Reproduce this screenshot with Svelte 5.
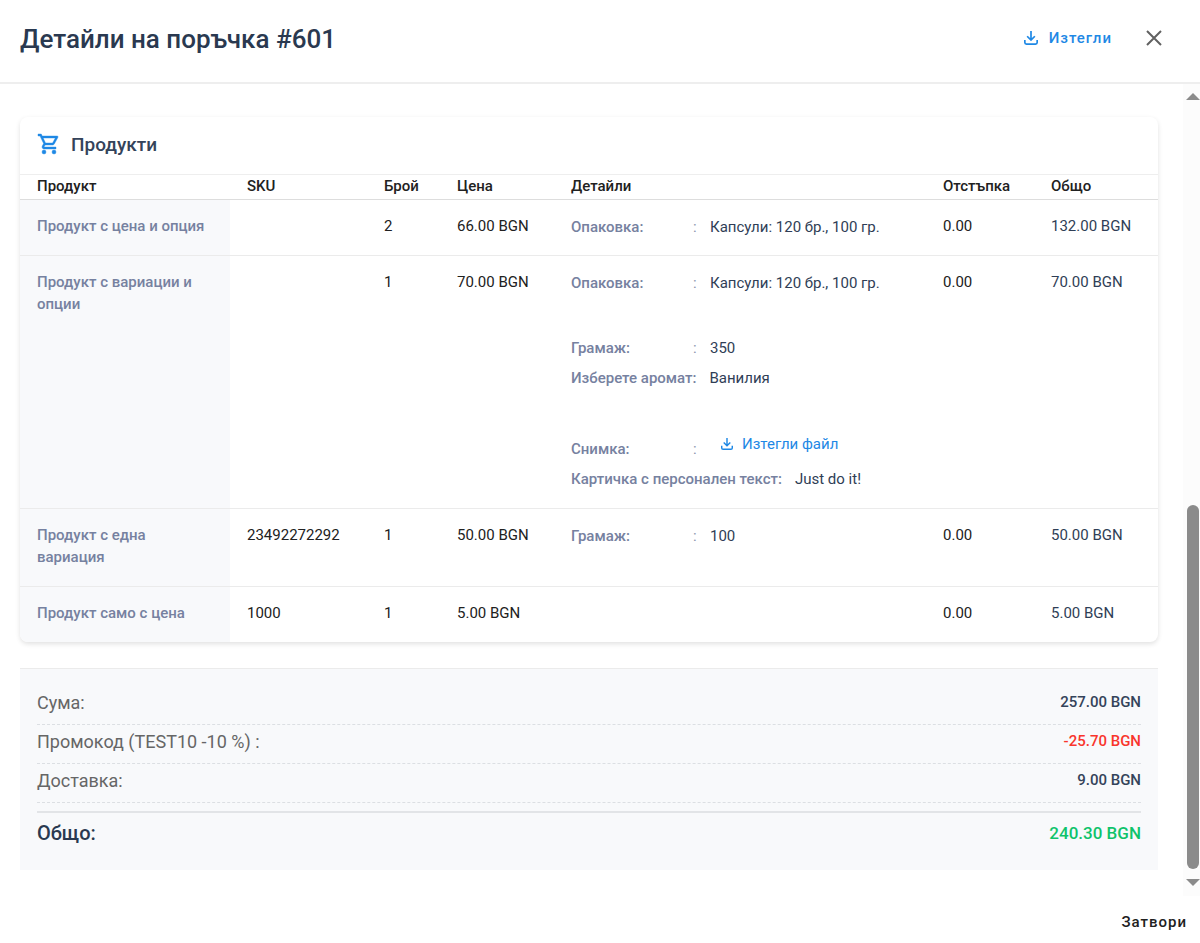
<script lang="ts">
	type Detail = { label: string; value: string; colon?: boolean; file?: boolean };
	type Product = {
		name: string;
		sku: string;
		count: number;
		price: string;
		details: Detail[][];
		discount: string;
		total: string;
	};

	const columns = [
		{ key: 'name', title: 'Продукт' },
		{ key: 'sku', title: 'SKU' },
		{ key: 'count', title: 'Брой' },
		{ key: 'price', title: 'Цена' },
		{ key: 'details', title: 'Детайли' },
		{ key: 'discount', title: 'Отстъпка' },
		{ key: 'total', title: 'Общо' }
	];

	const pack: Detail = { label: 'Опаковка:', value: 'Капсули: 120 бр., 100 гр.', colon: true };

	const products: Product[] = [
		{
			name: 'Продукт с цена и опция',
			sku: '',
			count: 2,
			price: '66.00 BGN',
			details: [[pack]],
			discount: '0.00',
			total: '132.00 BGN'
		},
		{
			name: 'Продукт с вариации и опции',
			sku: '',
			count: 1,
			price: '70.00 BGN',
			details: [
				[pack],
				[
					{ label: 'Грамаж:', value: '350', colon: true },
					{ label: 'Изберете аромат:', value: 'Ванилия' }
				],
				[
					{ label: 'Снимка:', value: 'Изтегли файл', colon: true, file: true },
					{ label: 'Картичка с персонален текст:', value: 'Just do it!' }
				]
			],
			discount: '0.00',
			total: '70.00 BGN'
		},
		{
			name: 'Продукт с една вариация',
			sku: '23492272292',
			count: 1,
			price: '50.00 BGN',
			details: [[{ label: 'Грамаж:', value: '100', colon: true }]],
			discount: '0.00',
			total: '50.00 BGN'
		},
		{
			name: 'Продукт само с цена',
			sku: '1000',
			count: 1,
			price: '5.00 BGN',
			details: [],
			discount: '0.00',
			total: '5.00 BGN'
		}
	];

	const summary = [
		{ label: 'Сума:', value: '257.00 BGN' },
		{ label: 'Промокод (TEST10 -10 %) :', value: '-25.70 BGN', negative: true },
		{ label: 'Доставка:', value: '9.00 BGN' }
	];
</script>

{#snippet downloadIcon(size: number)}
	<svg width={size} height={size} viewBox="0 0 20 20" fill="none" aria-hidden="true">
		<path
			d="M10 0v13M4.500 7.500L10 13l5.500-5.500M1.200 13v3.500a2.300 2.300 0 0 0 2.300 2.300h13a2.300 2.300 0 0 0 2.300-2.300V13"
			stroke="currentColor"
			stroke-width="2.400"
		/>
	</svg>
{/snippet}

<div class="dialog">
	<header class="dialog-header">
		<h1>Детайли на поръчка #601</h1>
		<div class="actions">
			<button class="download" type="button">
				{@render downloadIcon(14)}
				Изтегли
			</button>
			<button class="close" type="button" aria-label="Затвори прозореца">
				<svg width="16" height="16" viewBox="0 0 16 16" aria-hidden="true">
					<path d="M1 1l14 14M15 1L1 15" stroke="currentColor" stroke-width="2" fill="none" />
				</svg>
			</button>
		</div>
	</header>

	<div class="dialog-body">
		<main>
			<section class="card">
				<h2>
					<svg width="24" height="24" viewBox="0 0 24 24" fill="currentColor" aria-hidden="true">
						<path
							d="M15.550 13c.75 0 1.410-.41 1.750-1.030l3.580-6.490A1 1 0 0 0 20.010 4H5.210l-.94-2H1v2h2l3.600 7.590-1.350 2.440C4.520 15.370 5.480 17 7 17h12v-2H7l1.100-2h7.450zM6.160 6h12.150l-2.760 5H8.530L6.160 6zM7 18a2 2 0 1 0 0 4 2 2 0 0 0 0-4zm10 0a2 2 0 1 0 0 4 2 2 0 0 0 0-4z"
							stroke="currentColor"
							stroke-width="0.400"
						/>
					</svg>
					Продукти
				</h2>
				<table>
					<colgroup>
						{#each columns as column}
							<col class={column.key} />
						{/each}
					</colgroup>
					<thead>
						<tr>
							{#each columns as column}
								<th scope="col">{column.title}</th>
							{/each}
						</tr>
					</thead>
					<tbody>
						{#each products as product}
							<tr>
								<th scope="row">{product.name}</th>
								<td>{product.sku}</td>
								<td>{product.count}</td>
								<td>{product.price}</td>
								<td>
									{#each product.details as group}
										<div class="group">
											{#each group as detail}
												<div class="detail" class:with-file={detail.file}>
													<span class="label" class:fixed={detail.colon}>{detail.label}</span>
													{#if detail.colon}
														<span class="colon">:</span>
													{/if}
													{#if detail.file}
														<a class="file" href="#file">
															{@render downloadIcon(12)}
															{detail.value}
														</a>
													{:else}
														<span class="value">{detail.value}</span>
													{/if}
												</div>
											{/each}
										</div>
									{/each}
								</td>
								<td>{product.discount}</td>
								<td class="total">{product.total}</td>
							</tr>
						{/each}
					</tbody>
				</table>
			</section>

			<section class="summary">
				{#each summary as row}
					<div class="summary-row">
						<span>{row.label}</span>
						<strong class:negative={row.negative}>{row.value}</strong>
					</div>
				{/each}
				<div class="grand-total">
					<span>Общо:</span>
					<strong>240.30 BGN</strong>
				</div>
			</section>
		</main>

		<div class="scrollbar" aria-hidden="true">
			<span class="arrow up"></span>
			<div class="track"><div class="thumb"></div></div>
			<span class="arrow down"></span>
		</div>
	</div>

	<footer>
		<button type="button">Затвори</button>
	</footer>
</div>

<style>
	:global(body) {
		margin: 0;
		background: #fff;
	}

	.dialog {
		display: flex;
		flex-direction: column;
		min-height: 100vh;
		font-family: Roboto, 'Liberation Sans', sans-serif;
		font-size: 15px;
		color: #212121;
	}

	button {
		padding: 0;
		border: 0;
		background: none;
		color: inherit;
		font: inherit;
		font-weight: 500;
		letter-spacing: 1px;
		cursor: pointer;
	}

	svg {
		display: block;
		flex: none;
	}

	.dialog-header {
		display: flex;
		align-items: center;
		justify-content: space-between;
		box-sizing: border-box;
		height: 84px;
		padding: 0 38px 4px 20px;
		border-bottom: 2px solid #eee;
	}

	h1 {
		margin: 0;
		font-size: 26px;
		line-height: 32px;
		font-weight: 500;
		color: #2a3950;
	}

	.actions {
		display: flex;
		align-items: center;
		gap: 34px;
		padding-bottom: 2px;
	}

	.download {
		display: flex;
		align-items: center;
		gap: 11px;
		color: #1e88e5;
	}

	.close {
		color: #616161;
	}

	.dialog-body {
		display: flex;
		flex: 1;
	}

	main {
		flex: 1;
		min-width: 0;
		padding: 33px 25px 0 20px;
	}

	.card {
		overflow: hidden;
		border-radius: 8px;
		box-shadow: 0 2px 5px rgba(0, 0, 0, 0.12);
	}

	h2 {
		display: flex;
		align-items: center;
		gap: 10px;
		height: 54px;
		margin: 0;
		padding: 0 17px 3px;
		border-bottom: 1px solid #eee;
		font-size: 19px;
		font-weight: 500;
		color: #34435a;
	}

	h2 svg {
		color: #1e88e5;
	}

	table {
		width: 100%;
		table-layout: fixed;
		border-collapse: separate;
		border-spacing: 0;
	}

	.name {
		width: 210px;
	}

	.sku {
		width: 137px;
	}

	.count {
		width: 73px;
	}

	.price {
		width: 114px;
	}

	.discount {
		width: 108px;
	}

	.total {
		width: 124px;
	}

	th,
	td {
		box-sizing: border-box;
		padding: 15px 17px 16px;
		border-bottom: 1px solid #ebebeb;
		line-height: 22px;
		font-weight: 400;
		text-align: left;
		vertical-align: top;
	}

	thead th {
		padding: 0 17px 2px;
		border-color: #ddd;
		font-weight: 500;
	}

	tbody th {
		padding-bottom: 18px;
		background: #f8f9fb;
		font-weight: 500;
		color: #7681a0;
	}

	tbody tr:last-child > * {
		border-bottom: 0;
	}

	td.total {
		color: #2f3e56;
	}

	.group + .group {
		padding: 41px 0 1px;
	}

	.detail {
		display: flex;
		align-items: flex-end;
		line-height: 24px;
		white-space: nowrap;
	}

	.detail + .detail {
		margin-top: 6px;
	}

	.label {
		margin-right: 13px;
		font-weight: 500;
		color: #7681a0;
	}

	.label.fixed {
		width: 122px;
		margin-right: 0;
	}

	.colon {
		width: 17px;
		color: #8a94ae;
	}

	.value {
		color: #2f3e56;
	}

	.with-file {
		height: 29px;
	}

	.file {
		display: flex;
		align-items: center;
		align-self: flex-start;
		gap: 9px;
		margin-left: 11px;
		color: #1e88e5;
		text-decoration: none;
	}

	.summary {
		margin-top: 26px;
		padding: 17px 17px 19px;
		border-top: 1px solid #ebebeb;
		background: #f8f9fb;
	}

	.summary-row {
		display: flex;
		justify-content: space-between;
		padding-bottom: 4px;
		border-bottom: 1px dashed #dcdfe3;
		line-height: 34px;
		font-size: 18px;
		color: #666;
	}

	.summary-row strong {
		font-size: 15px;
		line-height: 32px;
		font-weight: 500;
		color: #34435a;
	}

	.summary-row .negative {
		color: #f9352c;
	}

	.grand-total {
		display: flex;
		align-items: center;
		justify-content: space-between;
		height: 36px;
		margin-top: 8px;
		padding-top: 2px;
		border-top: 2px solid #e2e4e7;
		font-size: 20px;
		font-weight: 500;
		line-height: 36px;
		color: #2a3950;
	}

	.grand-total strong {
		font-size: 17px;
		font-weight: 500;
		color: #0fc36b;
	}

	.scrollbar {
		display: flex;
		flex-direction: column;
		align-items: center;
		box-sizing: border-box;
		width: 17px;
		padding: 9px 0 10px 3px;
		background: #fcfcfc;
	}

	.arrow {
		border: 7px solid transparent;
	}

	.up {
		border-top: 0;
		border-bottom-color: #8b8b8b;
	}

	.down {
		border-bottom: 0;
		border-top-color: #8b8b8b;
	}

	.track {
		display: flex;
		flex: 1;
		align-items: flex-end;
		padding: 10px 0;
	}

	.thumb {
		width: 12px;
		height: 48%;
		border-radius: 6px;
		background: #8b8b8b;
	}

	footer {
		display: flex;
		justify-content: flex-end;
		padding: 15px 13px 10px;
		line-height: 22px;
	}
</style>
